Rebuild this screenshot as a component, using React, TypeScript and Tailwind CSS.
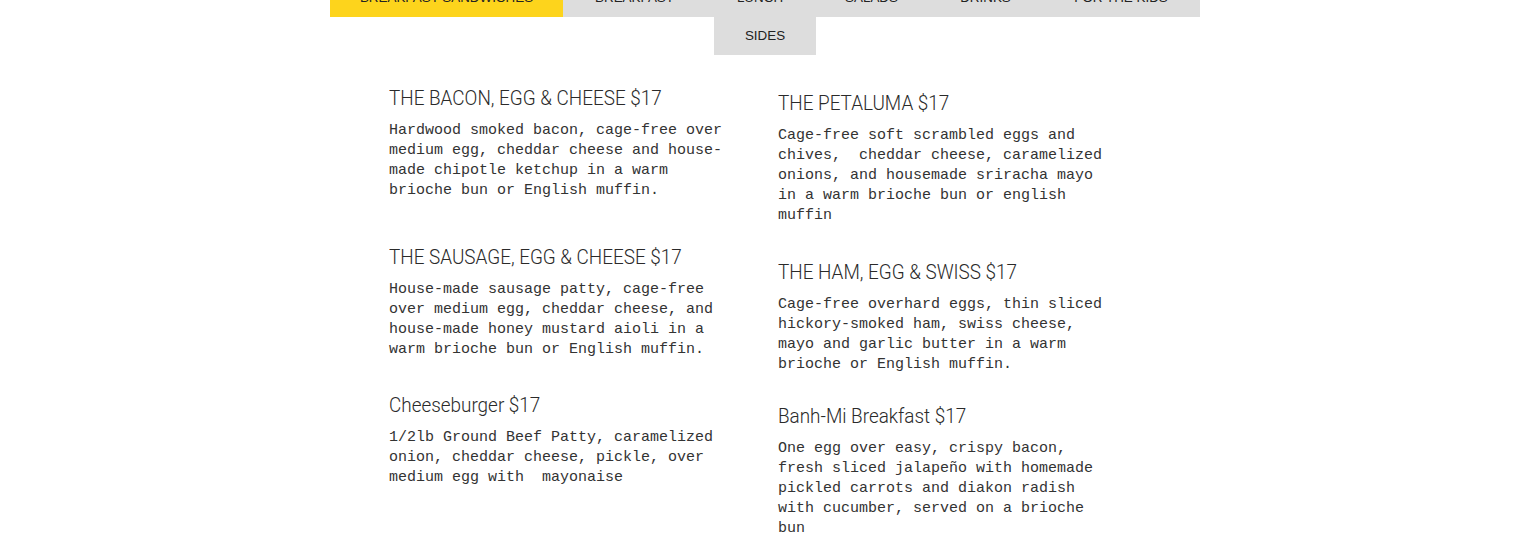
import React from "react";

const tabs: { t: string; w: string }[] = [
  { t: "BREAKFAST SANDWICHES", w: "w-[233px]" },
  { t: "BREAKFAST", w: "w-[143px]" },
  { t: "LUNCH", w: "w-[108px]" },
  { t: "SALADS", w: "w-[115px]" },
  { t: "DRINKS", w: "w-[113px]" },
  { t: "FOR THE KIDS", w: "w-[158px]" },
  { t: "SIDES", w: "w-[102px]" },
];

type Item = { title: string; desc: string; gap: string };

const left: Item[] = [
  {
    title: "THE BACON, EGG & CHEESE $17",
    desc: "Hardwood smoked bacon, cage-free over medium egg, cheddar cheese and house-made chipotle ketchup in a warm brioche bun or English muffin.",
    gap: "mt-[30px]",
  },
  {
    title: "THE SAUSAGE, EGG & CHEESE $17",
    desc: "House-made sausage patty, cage-free over medium egg, cheddar cheese, and house-made honey mustard aioli in a warm brioche bun or English muffin.",
    gap: "mt-[43px]",
  },
  {
    title: "Cheeseburger $17",
    desc: "1/2lb Ground Beef Patty, caramelized onion, cheddar cheese, pickle, over medium egg with  mayonaise",
    gap: "mt-[32px]",
  },
];

const right: Item[] = [
  {
    title: "THE PETALUMA $17",
    desc: "Cage-free soft scrambled eggs and chives,  cheddar cheese, caramelized onions, and housemade sriracha mayo in a warm brioche bun or english muffin",
    gap: "mt-[35px]",
  },
  {
    title: "THE HAM, EGG & SWISS $17",
    desc: "Cage-free overhard eggs, thin sliced hickory-smoked ham, swiss cheese, mayo and garlic butter in a warm brioche or English muffin.",
    gap: "mt-[33px]",
  },
  {
    title: "Banh-Mi Breakfast $17",
    desc: "One egg over easy, crispy bacon, fresh sliced jalapeño with homemade pickled carrots and diakon radish with cucumber, served on a brioche bun",
    gap: "mt-[28px]",
  },
];

function MenuItem({ item }: { item: Item }) {
  return (
    <div className={item.gap}>
      <h3 className="origin-left scale-x-[0.9] whitespace-nowrap text-[21px] leading-[26px] text-[#2a2a2a] font-['Roboto',sans-serif] font-light">
        {item.title}
      </h3>
      <p className="mt-[10px] w-[338px] text-[15px] leading-[20px] text-[#333] whitespace-pre-wrap font-['Liberation_Mono',monospace]">
        {item.desc}
      </p>
    </div>
  );
}

export default function App() {
  return (
    <div className="w-[1530px] h-[550px] bg-white overflow-hidden">
      <div className="mx-auto w-[870px] -mt-[21px]">
        <div className="flex flex-wrap justify-center -mx-[10px]">
          {tabs.map((tab, i) => (
            <div
              key={tab.t}
              className={`${tab.w} h-[38px] flex items-center justify-center text-[13.4px] text-[#222] font-['Liberation_Sans',Arial,sans-serif] whitespace-nowrap ${
                i === 0 ? "bg-[#fdd41c]" : "bg-[#dddddd]"
              }`}
            >
              {tab.t}
            </div>
          ))}
        </div>
        <div className="flex pl-[59px] gap-[51px]">
          <div className="w-[338px]">
            {left.map((it) => (
              <MenuItem key={it.title} item={it} />
            ))}
          </div>
          <div className="w-[338px]">
            {right.map((it) => (
              <MenuItem key={it.title} item={it} />
            ))}
          </div>
        </div>
      </div>
    </div>
  );
}
